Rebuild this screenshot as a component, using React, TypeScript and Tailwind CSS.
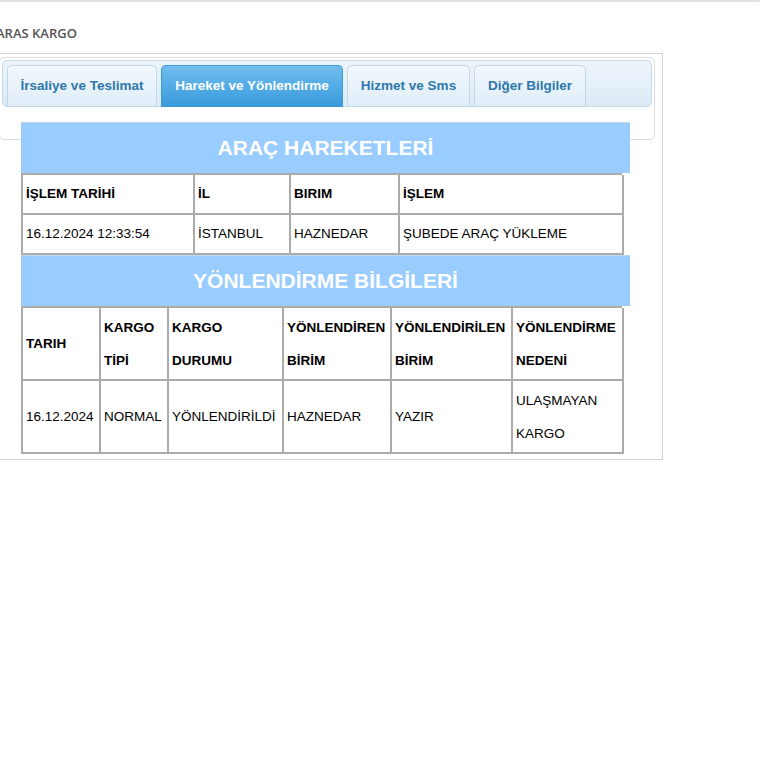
const tabs = [
  { label: 'İrsaliye ve Teslimat', w: 'w-[150px]' },
  { label: 'Hareket ve Yönlendirme', w: 'w-[182px]', active: true },
  { label: 'Hizmet ve Sms', w: 'w-[123px]' },
  { label: 'Diğer Bilgiler', w: 'w-[112px]' },
]

const cell = 'border-r-2 border-b-2 border-[#ababab] pl-[3px] pr-[2px] flex items-center'

function Band({ title }: { title: string }) {
  return (
    <div className="w-[609px] h-[51px] bg-[#99ccff] border-t border-[#c2d6ea] flex items-center justify-center text-white font-bold text-[21px]">
      {title}
    </div>
  )
}

export default function App() {
  return (
    <div className="w-[768px] h-[768px] bg-white overflow-hidden font-['Liberation_Sans',Arial,sans-serif] text-black">
      <div className="w-[760px] h-[2px] bg-[#e2e2e2] rounded-r" />
      <div className="ml-[-4px] mt-[22px] h-[18px] text-[13px] leading-[18px] text-[#555] font-['Open_Sans',sans-serif] font-semibold">
        ARAS KARGO
      </div>
      <div className="mt-[11px] ml-[-6px] w-[669px] h-[407px] border border-[#d2d2d2] pl-[4px] pt-[3px]">
        <div className="w-[656px] h-[83px] border border-[#dcdcdc] rounded-[5px] p-[2px]">
          {/* tab nav */}
          <div className="h-[47px] border border-[#c5dbea] rounded-[5px] bg-gradient-to-b from-[#eef5fb] to-[#dceaf5] px-[4px] pt-[4px] flex items-end gap-[4px]">
            {tabs.map((t) =>
              t.active ? (
                <div
                  key={t.label}
                  className={`${t.w} h-[42px] mb-[-1px] rounded-t-[5px] border border-b-0 border-[#3b9ad9] bg-gradient-to-b from-[#72bdec] via-[#52abe6] to-[#389ada] flex items-center justify-center text-white font-bold text-[13.5px]`}
                >
                  {t.label}
                </div>
              ) : (
                <div
                  key={t.label}
                  className={`${t.w} h-[42px] mb-[-1px] rounded-t-[5px] border border-[#c3d7e6] bg-gradient-to-b from-[#f2f8fd] to-[#dfedf8] flex items-center justify-center text-[#2e78ab] font-bold text-[13.5px]`}
                >
                  {t.label}
                </div>
              )
            )}
          </div>
          {/* panel content */}
          <div className="ml-[19px] mt-[15px]">
            <Band title="ARAÇ HAREKETLERİ" />
            <div className="w-[601px] grid grid-cols-[172px_96px_109px_224px] border-l-2 border-t-2 border-[#ababab] bg-white text-[13.5px]">
              <div className={`${cell} h-[40px] font-bold`}>İŞLEM TARİHİ</div>
              <div className={`${cell} h-[40px] font-bold`}>İL</div>
              <div className={`${cell} h-[40px] font-bold`}>BIRIM</div>
              <div className={`${cell} h-[40px] font-bold`}>İŞLEM</div>
              <div className={`${cell} h-[40px]`}>16.12.2024 12:33:54</div>
              <div className={`${cell} h-[40px]`}>İSTANBUL</div>
              <div className={`${cell} h-[40px]`}>HAZNEDAR</div>
              <div className={`${cell} h-[40px]`}>ŞUBEDE ARAÇ YÜKLEME</div>
            </div>
            <Band title="YÖNLENDİRME BİLGİLERİ" />
            <div className="w-[601px] grid grid-cols-[78px_68px_115px_108px_121px_111px] border-l-2 border-t-2 border-[#ababab] bg-white text-[13.5px] leading-[33px]">
              <div className={`${cell} h-[73px] font-bold`}>TARIH</div>
              <div className={`${cell} h-[73px] font-bold`}>KARGO<br />TİPİ</div>
              <div className={`${cell} h-[73px] font-bold`}>KARGO<br />DURUMU</div>
              <div className={`${cell} h-[73px] font-bold`}>YÖNLENDİREN<br />BİRİM</div>
              <div className={`${cell} h-[73px] font-bold`}>YÖNLENDİRİLEN<br />BİRİM</div>
              <div className={`${cell} h-[73px] font-bold`}>YÖNLENDİRME<br />NEDENİ</div>
              <div className={`${cell} h-[73px]`}>16.12.2024</div>
              <div className={`${cell} h-[73px]`}>NORMAL</div>
              <div className={`${cell} h-[73px]`}>YÖNLENDİRİLDİ</div>
              <div className={`${cell} h-[73px]`}>HAZNEDAR</div>
              <div className={`${cell} h-[73px]`}>YAZIR</div>
              <div className={`${cell} h-[73px]`}>ULAŞMAYAN<br />KARGO</div>
            </div>
          </div>
        </div>
      </div>
    </div>
  )
}
